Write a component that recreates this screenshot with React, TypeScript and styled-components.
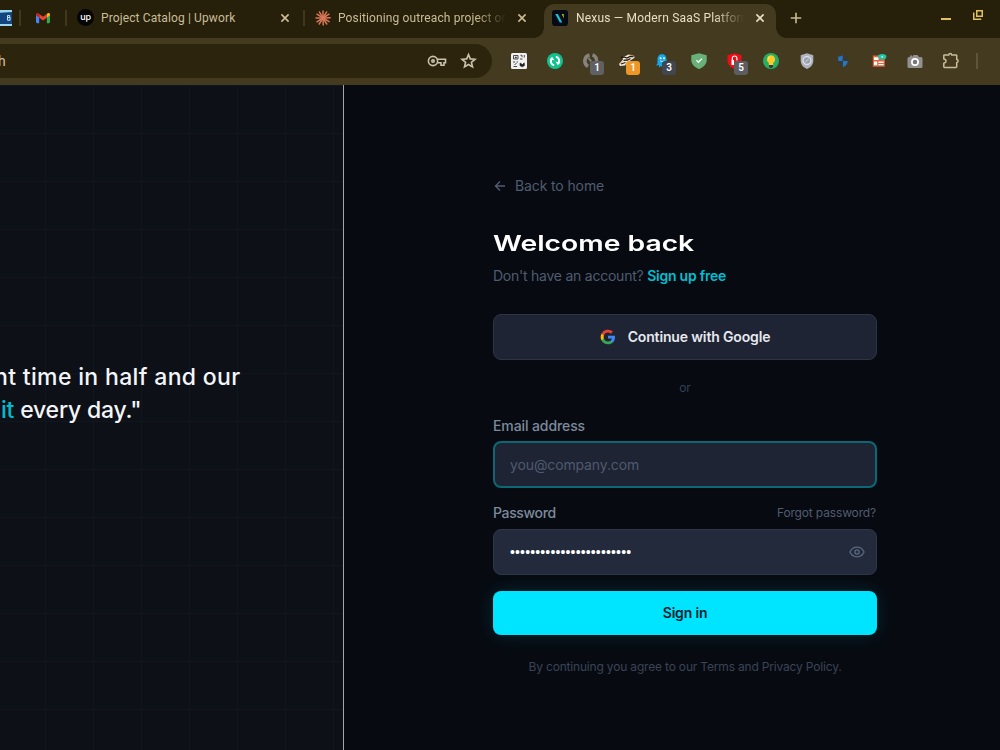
import React from 'react';
import styled, { createGlobalStyle } from 'styled-components';

const GlobalStyle = createGlobalStyle`
  * { box-sizing: border-box; }
  body { margin: 0; overflow: hidden; background: #070a11; }
`;

const Screen = styled.div`
  display: flex;
  flex-direction: column;
  width: 1000px;
  height: 750px;
  overflow: hidden;
  font-family: Inter, sans-serif;
`;

/* ---------- browser chrome ---------- */

const TabStrip = styled.div`
  display: flex;
  flex: none;
  height: 38px;
  background: #261f0a;
  color: #c9bd97;
  font: 400 12px/16px Roboto, sans-serif;
  letter-spacing: 0.12px;
`;

const TabDivider = styled.i`
  flex: none;
  width: 2px;
  height: 16px;
  margin-top: 10px;
  background: #41371c;
`;

const PinnedTab = styled.div<{ $width: number }>`
  display: flex;
  flex: none;
  justify-content: center;
  width: ${(p) => p.$width}px;
  padding-top: 10px;
  overflow: hidden;
`;

const Tab = styled.div<{ $width: number; $end: number }>`
  display: flex;
  flex: none;
  width: ${(p) => p.$width}px;
  padding: 10px ${(p) => p.$end}px 0 10px;
`;

const ActiveTab = styled(Tab)`
  position: relative;
  height: 34px;
  margin-top: 4px;
  padding: 6px ${(p) => p.$end}px 0 8px;
  border-radius: 10px 10px 0 0;
  background: #433a20;
  color: #e8dfc3;

  &::before,
  &::after {
    content: '';
    position: absolute;
    bottom: 0;
    width: 10px;
    height: 10px;
  }
  &::before {
    left: -10px;
    background: radial-gradient(circle at 0 0, transparent 9.5px, #433a20 10px);
  }
  &::after {
    right: -10px;
    background: radial-gradient(circle at 100% 0, transparent 9.5px, #433a20 10px);
  }
`;

const TabTitle = styled.span<{ $fade?: boolean }>`
  flex: 1;
  height: 16px;
  margin-left: 7px;
  overflow: hidden;
  white-space: nowrap;
  ${(p) => p.$fade && 'mask-image: linear-gradient(90deg, #000 calc(100% - 30px), transparent);'}

  ${ActiveTab} & {
    margin-left: 8px;
    letter-spacing: 0.2px;
  }
`;

const CloseIcon = styled.svg`
  flex: none;
  width: 12px;
  height: 16px;
  margin-left: 10px;
  fill: none;
  stroke: currentColor;
  stroke-width: 1.6;
`;

const Favicon = styled.svg`
  flex: none;
  width: 16px;
  height: 16px;
`;

const UpworkBadge = styled.span`
  flex: none;
  width: 17px;
  height: 17px;
  margin-top: -1px;
  border-radius: 50%;
  background: #050505;
  color: #fff;
  font: 500 9px/15px Inter, sans-serif;
  letter-spacing: -0.2px;
  text-align: center;
`;

const NewTab = styled.svg`
  flex: none;
  width: 12px;
  height: 12px;
  margin: 12px 0 0 14px;
  fill: none;
  stroke: #c9bd97;
  stroke-width: 1.6;
`;

const WindowControls = styled.svg`
  flex: none;
  width: 44px;
  height: 14px;
  margin: 9px 16px 0 auto;
  fill: none;
  stroke: #dfc25c;
  stroke-width: 2;
`;

const Toolbar = styled.div`
  display: flex;
  flex: none;
  align-items: flex-start;
  height: 47px;
  padding-top: 6px;
  background: #433a20;
`;

const AddressBar = styled.div`
  display: flex;
  flex: none;
  align-items: center;
  width: 492px;
  height: 34px;
  margin-right: 8px;
  padding-right: 15px;
  border-radius: 0 17px 17px 0;
  background: #2d240e;
  color: #c9c2ac;
  font: 400 14px/20px Roboto, sans-serif;
`;

const Url = styled.span`
  flex: 1;
  margin-left: -2px;
`;

const AddressIcon = styled.svg<{ $width: number }>`
  flex: none;
  width: ${(p) => p.$width}px;
  height: 18px;
  margin-left: 13px;
  fill: none;
  stroke: #c9c2ac;
  stroke-width: 1.6;
`;

const Extension = styled.div`
  position: relative;
  display: flex;
  flex: none;
  justify-content: center;
  width: 36px;
  padding: 9px 0 0 1px;
`;

const Count = styled.span<{ $color: string }>`
  position: absolute;
  top: 17px;
  left: 18px;
  width: 14px;
  height: 14px;
  border-radius: 3px;
  background: ${(p) => p.$color};
  color: #fff;
  font: 600 10px/14px Roboto, sans-serif;
  text-align: center;
`;

const ToolbarDivider = styled.i`
  width: 2px;
  height: 16px;
  margin: 9px 0 0 8px;
  background: #5f5539;
`;

/* ---------- page ---------- */

const Page = styled.main`
  display: flex;
  flex: 1;
  min-height: 0;
`;

const QuotePanel = styled.section`
  flex: none;
  width: 344px;
  padding-top: 276px;
  border-right: 1px solid #a3a5a8;
  background:
    linear-gradient(90deg, #0c171f 1px, transparent 1px) 45px 0 / 48px 48px,
    linear-gradient(#0c171f 1px, transparent 1px) 0 0 / 48px 48px,
    #0d1017;
`;

const QuoteLine = styled.p<{ $offset: number; $spacing: number }>`
  margin: 0 0 0 ${(p) => p.$offset}px;
  color: #f3f5f9;
  font: 500 23px/33px Inter, sans-serif;
  letter-spacing: ${(p) => p.$spacing}px;
  white-space: nowrap;
`;

const Accent = styled.em`
  color: #00bccd;
  font-style: normal;
`;

const LoginPanel = styled.section`
  flex: 1;
  padding: 91px 0 0 149px;
  background: #070a11;
`;

const Form = styled.form`
  display: flex;
  flex-direction: column;
  width: 384px;
  font-size: 14px;
  line-height: 20px;
`;

const BackLink = styled.a`
  display: flex;
  align-items: center;
  gap: 8px;
  color: #505c70;
  letter-spacing: -0.12px;
`;

const BackArrow = styled.svg`
  width: 14px;
  height: 14px;
  fill: none;
  stroke: currentColor;
  stroke-width: 1.4;
`;

const Heading = styled.h1`
  align-self: flex-start;
  margin: 33px 0 0;
  color: #fff;
  font: 600 22px/28px Inter, sans-serif;
  transform: scaleX(1.285);
  transform-origin: left;
`;

const SignUpLine = styled.p`
  margin: 9px 0 28px;
  color: #505c70;
  letter-spacing: -0.24px;
`;

const SignUpLink = styled.a`
  color: #00bfd2;
  font-weight: 600;
`;

const GoogleButton = styled.button`
  display: flex;
  align-items: center;
  justify-content: center;
  gap: 12px;
  height: 46px;
  padding: 0;
  border: 1px solid #2d3543;
  border-radius: 8px;
  background: #1e2433;
  color: #e6e9ee;
  font: 600 14px/20px Inter, sans-serif;
  letter-spacing: -0.15px;
`;

const OrDivider = styled.div`
  margin: 20px 0;
  color: #354052;
  font-size: 12px;
  line-height: 16px;
  text-align: center;
`;

const LabelRow = styled.div`
  display: flex;
  align-items: center;
  justify-content: space-between;
`;

const Label = styled.label<{ $spacing: number }>`
  color: #7d8a9c;
  font-weight: 500;
  letter-spacing: ${(p) => p.$spacing}px;
`;

const ForgotLink = styled.a`
  margin-right: 1px;
  color: #505c70;
  font-size: 12px;
  letter-spacing: -0.15px;
`;

const Field = styled.div<{ $focused?: boolean }>`
  display: flex;
  align-items: center;
  justify-content: space-between;
  height: ${(p) => (p.$focused ? 47 : 46)}px;
  margin: ${(p) => (p.$focused ? '5px 0 15px' : '6px 0 16px')};
  padding: 0 ${(p) => (p.$focused ? 15 : 11)}px 0 ${(p) => (p.$focused ? 15 : 16)}px;
  border: ${(p) => (p.$focused ? '2px solid #0b6874' : '1px solid #2e3647')};
  border-radius: 8px;
  background: ${(p) => (p.$focused ? '#1e2433' : '#222a3b')};
`;

const Placeholder = styled.span`
  color: #4e5a6f;
  letter-spacing: -0.13px;
`;

const Dots = styled.span`
  color: #fff;
  font: 400 14px/20px 'Liberation Sans', sans-serif;
  letter-spacing: 0.15px;
`;

const EyeIcon = styled.svg`
  width: 16px;
  height: 16px;
  fill: none;
  stroke: #5c6980;
  stroke-width: 1.3;
`;

const SubmitButton = styled.button`
  height: 44px;
  padding: 0;
  border: 0;
  border-radius: 8px;
  background: #00e5ff;
  box-shadow: 0 0 20px rgba(0, 229, 255, 0.13);
  color: #06202a;
  font: 600 14px/20px Inter, sans-serif;
  letter-spacing: -0.18px;
`;

const Terms = styled.p`
  margin: 24px 0 0;
  color: #3a4456;
  font-size: 12px;
  line-height: 16px;
  letter-spacing: -0.18px;
  text-align: center;
  white-space: nowrap;
`;

const Close = () => (
  <CloseIcon viewBox="0 0 12 16">
    <path d="M2.4 4.4l7.2 7.2M9.6 4.4l-7.2 7.2" />
  </CloseIcon>
);

const RAYS = [0, 31, 58, 88, 121, 148, 178, 212, 238, 271, 302, 329];

export default function App() {
  return (
    <Screen>
      <GlobalStyle />
      <TabStrip>
        <PinnedTab $width={19}>
          <Favicon viewBox="0 0 16 16" transform="translate(-6 0)">
            <path fill="#9bd7ef" d="M0 0h16v16H0z" />
            <path fill="#12467f" d="M0 3l16-1v12H0z" />
            <path d="M11.5 5.5h2.2v2h-2.2zM11.5 7.5h2.6v2.7h-2.6z" fill="none" stroke="#c5e6f3" />
          </Favicon>
        </PinnedTab>
        <TabDivider />
        <PinnedTab $width={44}>
          <Favicon viewBox="0 0 16 16">
            <path fill="#4285f4" d="M1 4.5l3.2 2.4v6.3H2.1A1.1 1.1 0 0 1 1 12.1z" />
            <path fill="#34a853" d="M11.8 6.9L15 4.5v7.6a1.1 1.1 0 0 1-1.1 1.1h-2.1z" />
            <path fill="#fbbc04" d="M11.8 3.9l.9-.7c1-.7 2.3 0 2.3 1.2v.9l-3.2 2.4z" />
            <path fill="#ea4335" d="M4.2 7.7V3.9L8 6.7l3.8-2.8v3.8L8 10.5z" />
            <path fill="#c5221f" d="M1 4.4c0-1.2 1.3-1.9 2.3-1.2l.9.7v3.8L1 5.3z" />
          </Favicon>
        </PinnedTab>
        <TabDivider />
        <Tab $width={236} $end={12}>
          <UpworkBadge>up</UpworkBadge>
          <TabTitle>Project Catalog | Upwork</TabTitle>
          <Close />
        </Tab>
        <TabDivider />
        <Tab $width={239} $end={16}>
          <Favicon viewBox="0 0 16 16">
            <g stroke="#d97757" strokeWidth="1.5" strokeLinecap="round">
              {RAYS.map((angle) => (
                <path key={angle} d="M8 8V0.9" transform={`rotate(${angle} 8 8)`} />
              ))}
            </g>
          </Favicon>
          <TabTitle $fade>Positioning outreach project on</TabTitle>
          <Close />
        </Tab>
        <ActiveTab $width={232} $end={10}>
          <Favicon viewBox="0 0 16 16">
            <rect width="16" height="16" rx="3" fill="#050a14" />
            <path d="M3.3 4h2.5l4.4 8.6H7.800z" fill="#16c7dc" />
            <path d="M7.600 4h2.200l1.900 4.600V4z" fill="#b7d80b" />
          </Favicon>
          <TabTitle $fade>Nexus — Modern SaaS Platform</TabTitle>
          <Close />
        </ActiveTab>
        <NewTab viewBox="0 0 12 12">
          <path d="M6 .8v10.4M.8 6h10.4" />
        </NewTab>
        <WindowControls viewBox="0 0 44 14">
          <path d="M1 10h10" />
          <path d="M36.750 1.750h5.500v5.500h-5.500z" strokeWidth="1.500" />
          <path d="M33.750 3.500v6.750h7.500" strokeWidth="1.500" />
        </WindowControls>
      </TabStrip>
      <Toolbar>
        <AddressBar>
          <Url>h</Url>
          <AddressIcon $width={20} viewBox="0 0 20 18">
            <circle cx="6" cy="9" r="4.6" />
            <circle cx="6" cy="9" r="1.2" />
            <path d="M10.2 7.2h8.3v3.6H17v2.4h-3v-2.4h-3.8" />
          </AddressIcon>
          <AddressIcon $width={17} viewBox="0 0 17 18">
            <path d="M8.5 2.6l1.8 4.3 4.7.4-3.6 3 1.1 4.6-4-2.4-4 2.4 1.1-4.6-3.6-3 4.7-.4z" />
          </AddressIcon>
        </AddressBar>
        <Extension>
          <Favicon viewBox="0 0 16 16">
            <rect width="16" height="16" rx="1.5" fill="#f1f1f1" />
            <path d="M2.500 2.500h4.500v3.500H2.500zM9.500 2.300h1.500v2M13.300 2v2.500M9 6h2.500M2 9h2M5.500 9h1.500M2.500 13.500h3.500M3.500 11.500l2-1" fill="none" stroke="#4a4a4a" strokeWidth="1" />
            <path d="M4.200 4h1.200v.8H4.200zM9 10l2.500 1.500 1.700-1.700.3 2.700-2 1.300-2.500-1z" fill="#222" stroke="#222" strokeWidth=".6" />
          </Favicon>
        </Extension>
        <Extension>
          <Favicon viewBox="0 0 16 16">
            <circle cx="8" cy="8" r="8" fill="#10c28d" />
            <path d="M7.200 12.200A4 4 0 0 1 4.500 6M8.800 3.800A4 4 0 0 1 11.500 10" fill="none" stroke="#fff" strokeWidth="2" />
            <path d="M2.500 6.800l2.600-3 2.300 3.500zM13.500 9.200l-2.600 3-2.300-3.500z" fill="#fff" />
          </Favicon>
        </Extension>
        <Extension>
          <Favicon viewBox="0 0 16 16">
            <path d="M6.500 2A6.2 6.2 0 0 0 5 13.4" fill="none" stroke="#85837d" strokeWidth="3.6" />
            <path d="M9.5 1.9A6.2 6.2 0 0 1 13.6 8" fill="none" stroke="#85837d" strokeWidth="3.4" />
            <path d="M5.5 5l2.7 3.4" stroke="#85837d" strokeWidth="2" />
          </Favicon>
          <Count $color="#606164">1</Count>
        </Extension>
        <Extension>
          <Favicon viewBox="0 0 16 16">
            <path d="M0 11l4-4.500L3.500 4l3-1 3-1.500 3 .8 3.500 1.700-1.500 1.500L12 7 8.500 9 6 12.500 1 13z" fill="#f2eadb" />
            <path d="M2 4.500l3-.5 3 1 3-1.500h3.500M4.500 7.300l4-.3 3-1.500M2 11l4.500-1.500" fill="none" stroke="#211a16" strokeWidth="1.300" />
            <path d="M0 11.500l3-3M11 2l4 1" stroke="#d58b55" strokeWidth=".9" />
          </Favicon>
          <Count $color="#ed9727">1</Count>
        </Extension>
        <Extension>
          <Favicon viewBox="0 0 16 16">
            <path d="M2.500 7C2.500 3 4.500 1.300 7 1.300S11.500 3 11.500 7v7l-2-1-1.500 1.500-2-1.500-2 1.500V12l-3 .5 1.500-2z" fill="#14a9ed" />
            <circle cx="5.600" cy="5.200" r="1" fill="#fff" />
            <circle cx="9" cy="5.200" r="1" fill="#fff" />
            <path d="M5.200 7.800c1.300 1 2.800 1 4 0" fill="none" stroke="#fff" strokeWidth=".8" />
          </Favicon>
          <Count $color="#414751">3</Count>
        </Extension>
        <Extension>
          <Favicon viewBox="0 0 16 16">
            <path d="M8 .3l7.7 2v5.2C15.5 11.3 12 14.6 8 16 4 14.6.5 11.3.3 7.5V2.3z" fill="#68b279" />
            <path d="M5.4 7.2l2 2 3.5-3.600" fill="none" stroke="#fff" strokeWidth="1.3" />
          </Favicon>
        </Extension>
        <Extension>
          <Favicon viewBox="0 0 16 16">
            <path d="M7.500 .3l7 2v5.200c0 4-3 6.900-7 8.500-4-1.600-7-4.500-7-8.500V2.300z" fill="#f10b16" />
            <path d="M5.300 7.500V5.300a2.300 2.300 0 0 1 4.600 0v2.200" fill="none" stroke="#fff" strokeWidth="1.200" />
            <path d="M4.500 7h2.500v5H4.500z" fill="#fff" />
          </Favicon>
          <Count $color="#5b5d61">5</Count>
        </Extension>
        <Extension>
          <Favicon viewBox="0 0 16 16">
            <circle cx="8" cy="8" r="8" fill="#26af62" />
            <path d="M8 2.200a4.100 4.100 0 0 0-2.200 7.500V12h4.400V9.700A4.100 4.100 0 0 0 8 2.200z" fill="#ffc928" />
            <path d="M6.700 3.500a3 3 0 0 0-1.300 2.700" fill="none" stroke="#ffe98b" />
            <path d="M6 12h4v1.500L9 15H7l-1-1.500z" fill="#2f3847" />
          </Favicon>
        </Extension>
        <Extension>
          <Favicon viewBox="0 0 16 16">
            <path d="M8 .3l6.300 2v5.200c0 4-2.500 6.900-6.300 8.500-3.800-1.600-6.300-4.500-6.300-8.500V2.300z" fill="#aeb3bd" />
            <circle cx="8" cy="7.500" r="3.900" fill="#9aa1ad" stroke="#dfe3e8" strokeWidth="1.200" />
            <path d="M6 9.500l4-4" stroke="#d3d7de" />
          </Favicon>
        </Extension>
        <Extension>
          <Favicon viewBox="0 0 16 16">
            <path d="M7.800 2v6H3.200V3.600c2 0 3.300-.6 4.600-1.600zM7.800 8h4.900c0 3-2 5-4.900 6.200z" fill="#2676c5" />
            <path d="M7.800 2c1.300 1 2.900 1.600 4.900 1.600V8H7.800zM3.200 8h4.600v6.200C4.900 13 3.200 11 3.200 8z" fill="#383a35" />
          </Favicon>
        </Extension>
        <Extension>
          <Favicon viewBox="0 0 16 16">
            <path d="M1.800 2.500h12v11.200h-12z" fill="#e6643d" />
            <path d="M3 4.200h4.500V7H3zM3 8.500h3.200v3.700H3zM7.400 8.500h5.200v1.500H7.400zM7.400 10.900h5.200v1.400H7.400z" fill="#fff" />
            <ellipse cx="11.200" cy="3.800" rx="4.200" ry="2.700" fill="#1fc4a6" />
            <circle cx="11.200" cy="3.800" r="1.100" fill="#9df0df" />
          </Favicon>
        </Extension>
        <Extension>
          <Favicon viewBox="0 0 16 16">
            <path d="M2 4h1V2.500h2V4l1.500-2h4L12 4h2a1.500 1.500 0 0 1 1.500 1.500v8A1.500 1.500 0 0 1 14 15H2a1.500 1.500 0 0 1-1.500-1.500v-8A1.500 1.500 0 0 1 2 4z" fill="#92918f" />
            <circle cx="8" cy="9" r="3.100" fill="#77777a" stroke="#fff" strokeWidth="1.700" />
          </Favicon>
        </Extension>
        <Extension>
          <Favicon viewBox="0 0 16 16" overflow="visible">
            <path d="M1.500 1.900h4.300a1.400 1.400 0 0 1 2.800 0H13a.7.7 0 0 1 .7.7v4a1.400 1.400 0 0 1 0 2.800v4.400a.7.7 0 0 1-.7.7H1.500a.7.7 0 0 1-.7-.7v-3.600c3-.6 3-3.800 0-4.200V2.600a.7.7 0 0 1 .7-.7z" fill="none" stroke="#c9bd97" strokeWidth="1.500" strokeLinejoin="round" />
          </Favicon>
        </Extension>
        <ToolbarDivider />
      </Toolbar>
      <Page>
        <QuotePanel>
          <QuoteLine $offset={-6} $spacing={0.34}>nt time in half and our</QuoteLine>
          <QuoteLine $offset={1} $spacing={-0.2}>
            <Accent>it</Accent> every day."
          </QuoteLine>
        </QuotePanel>
        <LoginPanel>
          <Form>
            <BackLink>
              <BackArrow viewBox="0 0 14 14">
                <path d="M12 7H2.500M7 2.500L2.500 7 7 11.500" />
              </BackArrow>
              Back to home
            </BackLink>
            <Heading>Welcome back</Heading>
            <SignUpLine>
              Don't have an account? <SignUpLink>Sign up free</SignUpLink>
            </SignUpLine>
            <GoogleButton type="button">
              <Favicon viewBox="0 0 24 24">
                <path fill="#4285F4" d="M22.560 12.250c0-.780-.070-1.530-.200-2.250H12v4.260h5.920a5.060 5.060 0 0 1-2.200 3.320v2.770h3.570c2.080-1.920 3.270-4.740 3.270-8.100z" />
                <path fill="#34A853" d="M12 23c2.970 0 5.460-.980 7.280-2.660l-3.570-2.770c-.980.660-2.230 1.060-3.710 1.060-2.860 0-5.290-1.930-6.160-4.530H2.180v2.840A11 11 0 0 0 12 23z" />
                <path fill="#FBBC05" d="M5.840 14.090a6.600 6.600 0 0 1 0-4.180V7.070H2.180a11 11 0 0 0 0 9.860z" />
                <path fill="#EA4335" d="M12 5.380c1.620 0 3.060.560 4.210 1.640l3.150-3.150A11 11 0 0 0 2.180 7.070l3.660 2.840C6.710 7.310 9.140 5.380 12 5.380z" />
              </Favicon>
              Continue with Google
            </GoogleButton>
            <OrDivider>or</OrDivider>
            <Label $spacing={-0.1}>Email address</Label>
            <Field $focused>
              <Placeholder>you@company.com</Placeholder>
            </Field>
            <LabelRow>
              <Label $spacing={-0.35}>Password</Label>
              <ForgotLink>Forgot password?</ForgotLink>
            </LabelRow>
            <Field>
              <Dots>••••••••••••••••••••••••</Dots>
              <EyeIcon viewBox="0 0 16 16">
                <path d="M1 8c1.400-3.100 4-4.800 7-4.800S13.600 4.900 15 8c-1.400 3.100-4 4.800-7 4.800S2.400 11.100 1 8z" />
                <circle cx="8" cy="8" r="2.100" />
              </EyeIcon>
            </Field>
            <SubmitButton type="button">Sign in</SubmitButton>
            <Terms>By continuing you agree to our Terms and Privacy Policy.</Terms>
          </Form>
        </LoginPanel>
      </Page>
    </Screen>
  );
}
